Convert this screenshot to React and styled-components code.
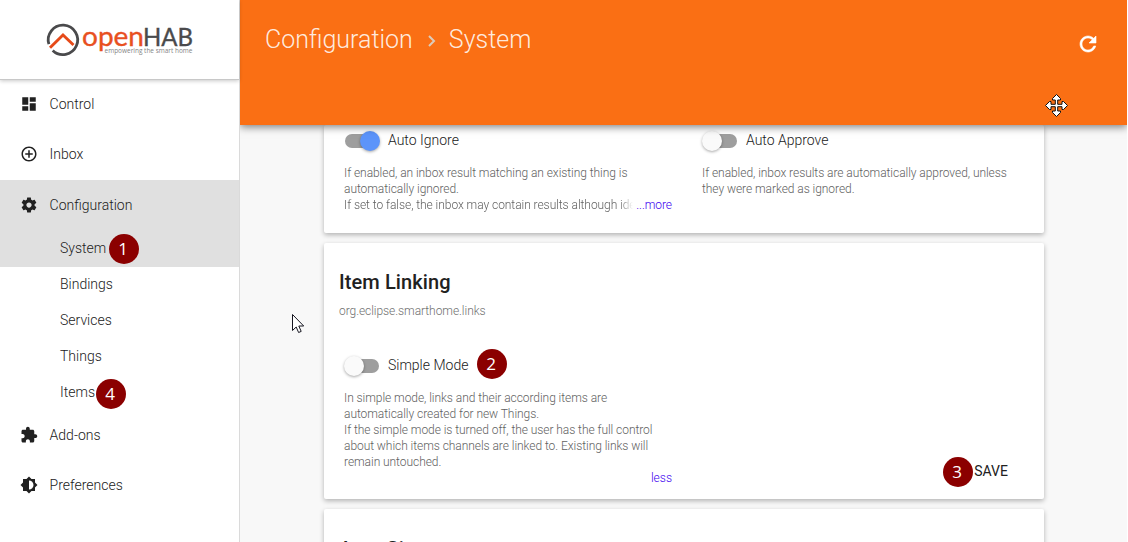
import React from "react";
import styled, { createGlobalStyle } from "styled-components";

const Global = createGlobalStyle`
  * { box-sizing: border-box; }
  body { margin: 0; background: #fff; font-family: Roboto, "Liberation Sans", sans-serif; font-weight: 300; color: #212121; overflow: hidden; }
  p, h1, h2 { margin: 0; font-weight: inherit; }
`;

const Shell = styled.div`
  display: flex;
  position: relative;
  width: 1127px;
  height: 542px;
  overflow: hidden;
`;

const Sidebar = styled.nav`
  width: 240px;
  flex: none;
  border-right: 1px solid #dadada;
  background: #fff;
  position: relative;
  z-index: 2;
`;

const Brand = styled.div`
  height: 80px;
  padding: 20px 0 0 44px;
  border-bottom: 1px solid #c8c8c8;
  box-shadow: 0 1px 4px rgba(0, 0, 0, 0.22);
`;

const NavList = styled.div`
  display: flex;
  flex-direction: column;
`;

const NavItem = styled.div`
  display: flex;
  align-items: center;
  height: 50px;
  padding: 0 0 ${(p) => (p.$open ? 0 : 2)}px 20px;
  gap: 11.6px;
  font-size: 14px;
  svg { width: 18px; height: 18px; fill: #212121; flex: none; }
`;

const NavGroup = styled.div`
  background: #e0e0e0;
  height: 87px;
`;

const SubItem = styled.div`
  display: flex;
  align-items: center;
  height: 36px;
  padding: 0 0 ${(p) => (p.$active ? 0 : 2)}px 60px;
  font-size: 14px;
`;

const Content = styled.div`
  flex: 1;
  display: flex;
  flex-direction: column;
  background: #f8f8f8;
`;

const Header = styled.header`
  display: flex;
  justify-content: space-between;
  flex: none;
  height: 125px;
  padding: 24px 29px 0 25px;
  background: #fa6f14;
  color: rgba(255, 255, 255, 0.87);
  box-shadow: 0 2px 8px rgba(0, 0, 0, 0.5);
  z-index: 1;
`;

const Crumbs = styled.h1`
  display: flex;
  height: 31px;
  align-items: center;
  font-size: 25px;
  svg { margin: 3px 9px 0 11px; }
`;

const RefreshIcon = styled.svg`
  width: 24px;
  height: 24px;
  margin: 8px -2px 0 0;
  fill: #fff;
  stroke: #fff;
  stroke-width: 0.6;
`;

const Cards = styled.main`
  display: flex;
  flex-direction: column;
  gap: 10px;
  width: 720px;
  margin-left: 84px;
`;

const Card = styled.section`
  flex: none;
  height: ${(p) => p.$height}px;
  padding: ${(p) => p.$padding};
  background: #fff;
  border-radius: 2px;
  box-shadow: 0 2px 5px rgba(0, 0, 0, 0.28);
`;

const Columns = styled.div`
  display: flex;
  gap: 30px;
`;

const Column = styled.div`
  width: 328px;
  flex: none;
`;

const LinkOptions = styled.div`
  padding: 36px 0 0 5px;
`;

const Title = styled.h2`
  height: 24px;
  font-size: 20px;
  font-weight: 500;
  line-height: 24px;
  letter-spacing: 0.1px;
  color: #212121;
`;

const Subtitle = styled.p`
  margin-top: 9px;
  font-size: 12px;
  line-height: 16px;
  letter-spacing: -0.06px;
  color: #6f6f6f;
`;

const SwitchRow = styled.div`
  display: flex;
  align-items: center;
  height: 20px;
  gap: 8px;
  font-size: 14px;
`;

const Track = styled.span`
  display: flex;
  align-items: center;
  justify-content: ${(p) => (p.$on ? "flex-end" : "flex-start")};
  width: 34px;
  height: 14px;
  margin: 1px 1px 0;
  border-radius: 7px;
  background: #9e9e9e;
`;

const Thumb = styled.span`
  flex: none;
  width: 20px;
  height: 20px;
  margin: 0 -1px;
  border-radius: 50%;
  background: ${(p) => (p.$on ? "#5c94fa" : "#fafafa")};
  box-shadow: 0 1px 3px rgba(0, 0, 0, 0.35);
`;

const Description = styled.div`
  margin-top: 15px;
  font-size: 12px;
  line-height: 16px;
  letter-spacing: -0.055px;
  color: #616161;
  white-space: nowrap;
`;

const LastLine = styled.div`
  display: flex;
  justify-content: space-between;
`;

const Clipped = styled.span`
  width: 290px;
  mask-image: linear-gradient(to right, #000 276px, transparent 289px);
`;

const Toggle = styled.span`
  color: #3d00f0;
`;

const Footer = styled.div`
  display: flex;
  justify-content: space-between;
  font-size: 12px;
  line-height: 16px;
`;

const LessLine = styled.div`
  width: 328px;
  text-align: right;
`;

const Save = styled.span`
  margin: -8px 21px 0 0;
  font-size: 14px;
  font-weight: 400;
  line-height: 18px;
`;

const Marker = styled.span`
  position: absolute;
  left: ${(p) => p.$x}px;
  top: ${(p) => p.$y}px;
  z-index: 3;
  display: flex;
  align-items: center;
  justify-content: center;
  width: 30px;
  height: 30px;
  padding: 0 1px 1px 0;
  border-radius: 50%;
  background: #8b0000;
  color: #fff;
  font: 400 17px "Open Sans", sans-serif;
`;

const Pointer = styled.svg`
  position: absolute;
  z-index: 3;
  left: ${(p) => p.$x}px;
  top: ${(p) => p.$y}px;
`;

const ICONS = {
  dashboard: "M3 13h8V3H3v10zm0 8h8v-6H3v6zm10 0h8V11h-8v10zm0-18v6h8V3h-8z",
  inbox: "M13 7h-2v4H7v2h4v4h2v-4h4v-2h-4V7zm-1-5C6.48 2 2 6.48 2 12s4.48 10 10 10 10-4.48 10-10S17.520 2 12 2zm0 18c-4.410 0-8-3.590-8-8s3.590-8 8-8 8 3.590 8 8-3.590 8-8 8z",
  settings: "M19.430 12.980c.04-.32.07-.64.07-.98s-.03-.66-.07-.98l2.110-1.650c.19-.15.24-.42.12-.64l-2-3.460c-.12-.22-.39-.3-.61-.22l-2.490 1c-.52-.4-1.080-.73-1.690-.98l-.38-2.650C14.460 2.180 14.250 2 14 2h-4c-.25 0-.46.18-.49.42l-.38 2.650c-.61.25-1.170.59-1.690.98l-2.490-1c-.23-.09-.49 0-.61.22l-2 3.460c-.13.22-.07.49.12.64l2.110 1.650c-.04.32-.07.65-.07.98s.03.66.07.98l-2.110 1.650c-.19.15-.24.42-.12.64l2 3.460c.12.22.39.3.61.22l2.490-1c.52.4 1.080.73 1.690.98l.38 2.650c.03.24.24.42.49.42h4c.25 0 .46-.18.49-.42l.38-2.650c.61-.25 1.170-.59 1.690-.98l2.490 1c.23.09.49 0 .61-.22l2-3.460c.12-.22.07-.49-.12-.64l-2.110-1.650zM12 15.500c-1.930 0-3.500-1.570-3.500-3.500s1.570-3.500 3.500-3.500 3.500 1.570 3.500 3.500-1.570 3.500-3.500 3.500z",
  extension: "M20.500 11H19V7c0-1.100-.9-2-2-2h-4V3.500C13 2.120 11.880 1 10.500 1S8 2.120 8 3.500V5H4c-1.100 0-1.990.9-1.990 2v3.800H3.500c1.490 0 2.700 1.210 2.700 2.700s-1.210 2.700-2.700 2.700H2V20c0 1.100.9 2 2 2h3.800v-1.500c0-1.490 1.210-2.700 2.700-2.700 1.490 0 2.700 1.210 2.700 2.700V22H17c1.100 0 2-.9 2-2v-4h1.500c1.380 0 2.500-1.120 2.500-2.500S21.880 11 20.500 11z",
  brightness: "M20 15.310L23.310 12 20 8.690V4h-4.690L12 .69 8.690 4H4v4.690L.69 12 4 15.310V20h4.690L12 23.310 15.310 20H20v-4.690zM12 18V6c3.310 0 6 2.690 6 6s-2.690 6-6 6z",
  refresh: "M17.650 6.350C16.200 4.900 14.210 4 12 4c-4.420 0-7.990 3.580-7.990 8s3.570 8 7.990 8c3.730 0 6.840-2.550 7.730-6h-2.080c-.82 2.330-3.040 4-5.650 4-3.310 0-6-2.690-6-6s2.690-6 6-6c1.660 0 3.140.69 4.220 1.780L13 11h7V4l-2.350 2.350z",
};

const Icon = ({ name }) => (
  <svg viewBox="0 0 24 24"><path d={ICONS[name]} /></svg>
);

const Logo = () => (
  <svg width="152" height="40" viewBox="44 20 152 40">
    <path d="M48.900 44.200A14.700 14.700 0 1 1 52.700 50.400" fill="none" stroke="#4a4a4c" strokeWidth="2.800" />
    <path d="M50 47.800L63 35L73.500 45" fill="none" stroke="#e64a19" strokeWidth="2.900" />
    <g fontFamily="Lato, sans-serif" fontWeight="400" strokeWidth="0.350">
      <text x="82" y="46" fontSize="27" textLength="62" lengthAdjust="spacingAndGlyphs" fill="#e8501f" stroke="#e8501f">open</text>
      <text x="143" y="46" fontSize="24.500" textLength="50" lengthAdjust="spacingAndGlyphs" fill="#4a4a4c" stroke="#4a4a4c">HAB</text>
    </g>
    <text x="104.500" y="53" fontFamily="Open Sans, sans-serif" fontWeight="400" fontSize="7" textLength="88" lengthAdjust="spacingAndGlyphs" fill="#858585">empowering the smart home</text>
  </svg>
);

const Switch = ({ on, children }) => (
  <SwitchRow>
    <Track $on={on}><Thumb $on={on} /></Track>
    {children}
  </SwitchRow>
);

export default function App() {
  return (
    <Shell>
      <Global />
      <Sidebar>
        <Brand><Logo /></Brand>
        <NavList>
          <NavItem><Icon name="dashboard" />Control</NavItem>
          <NavItem><Icon name="inbox" />Inbox</NavItem>
          <NavGroup>
            <NavItem $open><Icon name="settings" />Configuration</NavItem>
            <SubItem $active>System</SubItem>
          </NavGroup>
          <SubItem>Bindings</SubItem>
          <SubItem>Services</SubItem>
          <SubItem>Things</SubItem>
          <SubItem>Items</SubItem>
          <NavItem><Icon name="extension" />Add-ons</NavItem>
          <NavItem><Icon name="brightness" />Preferences</NavItem>
        </NavList>
      </Sidebar>
      <Content>
        <Header>
          <Crumbs>
            Configuration
            <svg width="16" height="16" viewBox="0 0 16 16"><path d="M5 3l5 5-5 5" fill="none" stroke="#dccbbb" strokeWidth="2" /></svg>
            System
          </Crumbs>
          <RefreshIcon viewBox="0 0 24 24"><path d={ICONS.refresh} /></RefreshIcon>
        </Header>
        <Cards>
          <Card $height={108} $padding="5px 20px 0">
            <Columns>
              <Column>
                <Switch on>Auto Ignore</Switch>
                <Description>
                  If enabled, an inbox result matching an existing thing is<br />
                  automatically ignored.
                  <LastLine>
                    <Clipped>If set to false, the inbox may contain results although ide</Clipped>
                    <Toggle>...more</Toggle>
                  </LastLine>
                </Description>
              </Column>
              <Column>
                <Switch>Auto Approve</Switch>
                <Description>
                  If enabled, inbox results are automatically approved, unless<br />
                  they were marked as ignored.
                </Description>
              </Column>
            </Columns>
          </Card>
          <Card $height={256} $padding="27px 15px 0">
            <Title>Item Linking</Title>
            <Subtitle>org.eclipse.smarthome.links</Subtitle>
            <LinkOptions>
              <Switch>Simple Mode</Switch>
              <Description>
                In simple mode, links and their according items are<br />
                automatically created for new Things.<br />
                If the simple mode is turned off, the user has the full control<br />
                about which items channels are linked to. Existing links will<br />
                remain untouched.
              </Description>
              <Footer>
                <LessLine><Toggle>less</Toggle></LessLine>
                <Save>SAVE</Save>
              </Footer>
            </LinkOptions>
          </Card>
          <Card $height={120} $padding="28px 15px 0">
            <Title>Auto Site</Title>
          </Card>
        </Cards>
      </Content>
      <Marker $x={108.6} $y={234.4}>1</Marker>
      <Marker $x={476.6} $y={349.4}>2</Marker>
      <Marker $x={942.5} $y={457.4}>3</Marker>
      <Marker $x={95.7} $y={379.4}>4</Marker>
      <Pointer $x={292} $y={314} width="13" height="20" viewBox="0 0 13 20">
        <path d="M.5 .5V16.500L4.200 13L6.600 18.500L9.200 17.400L6.800 12H11.700z" fill="#fff" stroke="#15151f" />
      </Pointer>
      <Pointer $x={1045} $y={94} width="23" height="23" viewBox="0 0 23 23">
        <path d="M11.500 .5L15.500 4.500V6H12.700V10.300H17V7.500H18.500L22.500 11.500L18.500 15.500H17V12.700H12.700V17H15.500V18.500L11.500 22.500L7.500 18.500V17H10.300V12.700H6V15.500H4.500L.5 11.500L4.500 7.500H6V10.300H10.300V6H7.500V4.500z" fill="#fff" stroke="#111" />
      </Pointer>
    </Shell>
  );
}
